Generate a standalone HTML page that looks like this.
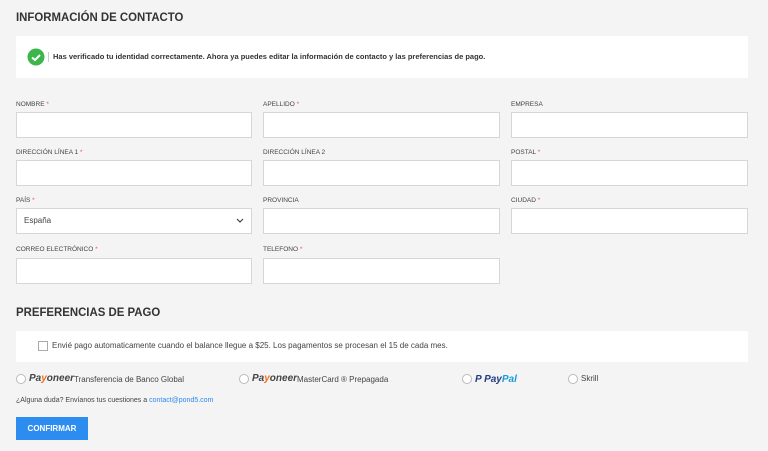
<!DOCTYPE html>
<html><head><meta charset="utf-8"><style>
*{box-sizing:border-box;margin:0;padding:0}
body{width:768px;height:451px;background:#f4f4f4;font-family:"Liberation Sans",sans-serif;color:#333;position:relative;overflow:hidden}
.a{position:absolute}
h1{position:absolute;left:16px;top:10px;font-size:12px;font-weight:bold;color:#333;transform:scaleX(0.95);transform-origin:left}
.box{background:#fff}
.lbl{position:absolute;font-size:6.5px;color:#444;text-transform:uppercase}
.lbl b{color:#e64aa5;font-weight:normal}
.in{position:absolute;height:26px;background:#fff;border:1px solid #d6d6d6;width:236px}
.c1{left:16px}.c2{left:263px;width:237px}.c3{left:511px;width:237px}
.r{position:absolute;width:10px;height:10px;border:1px solid #bbb;border-radius:50%;background:#fff}
.t{position:absolute;font-size:8px;color:#444}
.pay{position:absolute;font-size:10px;font-style:italic;font-weight:bold;color:#444}
.pay i{color:#f26b21}
</style></head><body>
<h1>INFORMACIÓN DE CONTACTO</h1>
<div class="a box" style="left:16px;top:36px;width:732px;height:42px"></div>
<svg class="a" style="left:27px;top:48px" width="18" height="18"><circle cx="9" cy="9" r="8.5" fill="#3cb64a"/><path d="M5 9.5l3 2.5 5-5" stroke="#fff" stroke-width="2" fill="none"/></svg>
<div class="a" style="left:48px;top:52px;width:1px;height:10px;background:#ccc"></div>
<div class="t" style="left:53px;top:52px;font-size:7.5px;font-weight:bold;color:#333">Has verificado tu identidad correctamente. Ahora ya puedes editar la información de contacto y las preferencias de pago.</div>

<div class="lbl" style="left:16px;top:101px">Nombre <b>*</b></div>
<div class="lbl" style="left:263px;top:101px">Apellido <b>*</b></div>
<div class="lbl" style="left:511px;top:101px">Empresa</div>
<div class="in c1" style="top:112px"></div><div class="in c2" style="top:112px"></div><div class="in c3" style="top:112px"></div>

<div class="lbl" style="left:16px;top:149px">Dirección línea 1 <b>*</b></div>
<div class="lbl" style="left:263px;top:149px">Dirección línea 2</div>
<div class="lbl" style="left:511px;top:149px">Postal <b>*</b></div>
<div class="in c1" style="top:160px"></div><div class="in c2" style="top:160px"></div><div class="in c3" style="top:160px"></div>

<div class="lbl" style="left:16px;top:197px">País <b>*</b></div>
<div class="lbl" style="left:263px;top:197px">Provincia</div>
<div class="lbl" style="left:511px;top:197px">Ciudad <b>*</b></div>
<div class="in c1" style="top:208px"></div><div class="in c2" style="top:208px"></div><div class="in c3" style="top:208px"></div>
<div class="t" style="left:24px;top:216px">España</div>
<svg class="a" style="left:236px;top:218px" width="8" height="6"><path d="M1 1l3 3 3-3" stroke="#444" stroke-width="1.2" fill="none"/></svg>

<div class="lbl" style="left:16px;top:246px">Correo electrónico <b>*</b></div>
<div class="lbl" style="left:263px;top:246px">Telefono <b>*</b></div>
<div class="in c1" style="top:258px"></div><div class="in c2" style="top:258px"></div>

<h1 style="top:305px">PREFERENCIAS DE PAGO</h1>
<div class="a box" style="left:16px;top:331px;width:732px;height:31px"></div>
<div class="a" style="left:38px;top:341px;width:10px;height:10px;border:1px solid #aaa;background:#fff"></div>
<div class="t" style="left:52px;top:341px">Envié pago automaticamente cuando el balance llegue a $25. Los pagamentos se procesan el 15 de cada mes.</div>

<div class="r" style="left:16px;top:374px"></div>
<div class="pay" style="left:29px;top:373px">Pa<i>y</i>oneer</div>
<div class="t" style="left:74px;top:375px">Transferencia de Banco Global</div>
<div class="r" style="left:239px;top:374px"></div>
<div class="pay" style="left:252px;top:373px">Pa<i>y</i>oneer</div>
<div class="t" style="left:297px;top:375px">MasterCard ® Prepagada</div>
<div class="r" style="left:462px;top:374px"></div>
<div class="pay" style="left:475px;top:374px;color:#253b80">P <span style="color:#253b80">Pay</span><span style="color:#179bd7">Pal</span></div>
<div class="r" style="left:568px;top:374px"></div>
<div class="t" style="left:581px;top:374px">Skrill</div>

<div class="t" style="left:16px;top:397px;font-size:7px">¿Alguna duda? Envíanos tus cuestiones a <span style="color:#2d89ef">contact@pond5.com</span></div>
<div class="a" style="left:16px;top:417px;width:72px;height:23px;background:#2d8cf0;color:#fff;font-size:8px;font-weight:bold;text-align:center;line-height:23px">CONFIRMAR</div>
</body></html>
